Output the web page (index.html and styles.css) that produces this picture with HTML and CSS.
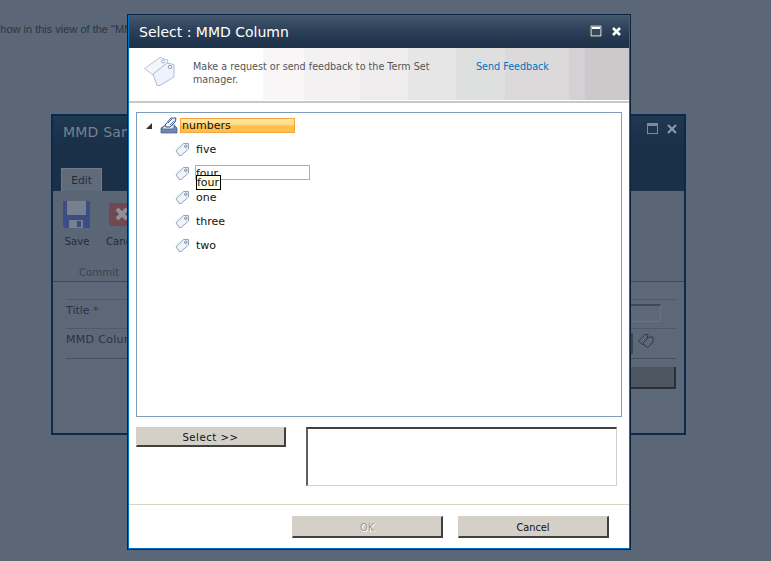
FILE: index.html
```html
<!DOCTYPE html>
<html lang="en">
<head>
<meta charset="utf-8">
<title>Select : MMD Column</title>
<link rel="stylesheet" href="styles.css">
</head>
<body>
<div class="desktop">
  <p class="page-text">Show in this view of the "MMD Sample" list</p>

  <section class="win-back">
    <div class="back-head">
      <div class="back-title-row">
        <span class="back-title">MMD Sample - New Item</span>
        <span class="back-controls">
          <svg width="11" height="11" viewBox="0 0 11 11"><rect x=".5" y=".5" width="10" height="10" fill="none" stroke="#7d8a99"/><rect x="1" y="1" width="9" height="2" fill="#7d8a99"/></svg>
          <svg width="10" height="10" viewBox="0 0 10 10"><path d="M1 1l8 8M9 1l-8 8" stroke="#8b97a5" stroke-width="2.2"/></svg>
        </span>
      </div>
      <div class="back-tab">Edit</div>
    </div>
    <div class="back-ribbon">
      <div class="ribbon-group">
        <div class="ribbon-tools">
          <div class="ribbon-tool">
            <svg width="28" height="27" viewBox="0 0 28 27"><path d="M0 0h27v27H2l-2-2z" fill="#3c4d85"/><rect x="4" y="0" width="19" height="14" fill="#77808f"/><rect x="6" y="19" width="14" height="8" fill="#77808f"/><rect x="14" y="20" width="4" height="6" fill="#3c4d85"/></svg>
            <span>Save</span>
          </div>
          <div class="ribbon-tool">
            <svg width="28" height="27" viewBox="0 0 28 27"><rect x="0" y="2" width="27" height="23" rx="2" fill="#70484f"/><path d="M8 8l10 10M18 8L8 18" stroke="#8f929c" stroke-width="4"/></svg>
            <span>Cancel</span>
          </div>
        </div>
        <div class="ribbon-label">Commit</div>
      </div>
    </div>
    <div class="back-form">
      <div class="form-row form-title">
        <span>Title <b>*</b></span>
        <i class="fake-input"></i>
      </div>
      <div class="form-row form-mmd">
        <span>MMD Column</span>
        <i class="fake-edge"></i>
        <svg width="16" height="15" viewBox="0 0 16 15"><path d="M.5 8L7 1.500h3L9 6 5 12z" fill="none" stroke="#2e3a4a" stroke-linejoin="round"/><path d="M5 10l6-6h4v5l-5 5H8z" fill="#5c6979" stroke="#2e3a4a" stroke-linejoin="round"/></svg>
      </div>
      <div class="back-button"></div>
    </div>
  </section>

  <section class="dialog">
    <header class="dlg-title">
      <h1>Select : MMD Column</h1>
      <div class="dlg-controls">
        <svg width="12" height="12" viewBox="0 0 12 12"><rect x=".5" y=".5" width="11" height="11" fill="#33475d" stroke="#000"/><rect x="1" y="1" width="10" height="10" fill="none" stroke="#fff"/><rect x="2" y="2" width="8" height="2" fill="#fff"/></svg>
        <svg width="11" height="11" viewBox="0 0 11 11"><path d="M2 2l7 7M9 2l-7 7" stroke="#fff" stroke-width="2.600"/></svg>
      </div>
    </header>

    <div class="dlg-banner">
      <svg class="banner-icon" width="31" height="29" viewBox="0 0 31 29">
        <path d="M.5 11.500L16 .5l8 2.500-1 5L9 18z" fill="#f3f6fb" stroke="#b4c4dc" stroke-linejoin="round"/>
        <circle cx="19" cy="4.500" r="1.500" fill="#fff" stroke="#9db0cc"/>
        <path d="M9 17L23 6l7 1.500V20l-14 8.500h-3z" fill="#eef2fa" stroke="#a9bbd6" stroke-linejoin="round"/>
        <circle cx="26" cy="10" r="1.700" fill="#fff" stroke="#8aa0c0"/>
      </svg>
      <p class="banner-text">Make a request or send feedback to the Term Set manager.</p>
      <a class="banner-link" href="#">Send Feedback</a>
    </div>

    <div class="dlg-body">
      <div class="tree">
        <div class="tree-root">
          <i class="twist"></i>
          <svg width="18" height="17" viewBox="0 0 18 17">
            <path d="M1 16V11l3-2h11l2 2v5z" fill="#6d89b5" stroke="#3d5a8a" stroke-width=".7"/>
            <path d="M2 11l4-3h9l-2 4H3z" fill="#e4ecf7" stroke="#3d5a8a" stroke-width=".7"/>
            <path d="M5 8l6-7h5l-1 4-5 5H6z" fill="#f4f7fc" stroke="#33528a"/>
            <path d="M8 6l4-4M10 8l4-4" stroke="#33528a" stroke-width=".8"/>
          </svg>
          <span class="root-label">numbers</span>
        </div>
        <ul class="terms">
          <li class="term">
            <svg class="tag" width="15" height="15" viewBox="0 0 15 15"><path d="M1 8.500L8.500 1.500h5V7L6 13.500H4z" fill="#eef2f9" stroke="#93a3bb" stroke-linejoin="round"/><circle cx="10.800" cy="4.300" r="1.200" fill="#fff" stroke="#6d809c"/></svg>
            <span class="term-label">five</span>
          </li>
          <li class="term term-hover">
            <svg class="tag" width="15" height="15" viewBox="0 0 15 15"><path d="M1 8.500L8.500 1.500h5V7L6 13.500H4z" fill="#eef2f9" stroke="#93a3bb" stroke-linejoin="round"/><circle cx="10.800" cy="4.300" r="1.200" fill="#fff" stroke="#6d809c"/></svg>
            <span class="term-label">four</span>
            <span class="tooltip">four</span>
          </li>
          <li class="term">
            <svg class="tag" width="15" height="15" viewBox="0 0 15 15"><path d="M1 8.500L8.500 1.500h5V7L6 13.500H4z" fill="#eef2f9" stroke="#93a3bb" stroke-linejoin="round"/><circle cx="10.800" cy="4.300" r="1.200" fill="#fff" stroke="#6d809c"/></svg>
            <span class="term-label">one</span>
          </li>
          <li class="term">
            <svg class="tag" width="15" height="15" viewBox="0 0 15 15"><path d="M1 8.500L8.500 1.500h5V7L6 13.500H4z" fill="#eef2f9" stroke="#93a3bb" stroke-linejoin="round"/><circle cx="10.800" cy="4.300" r="1.200" fill="#fff" stroke="#6d809c"/></svg>
            <span class="term-label">three</span>
          </li>
          <li class="term">
            <svg class="tag" width="15" height="15" viewBox="0 0 15 15"><path d="M1 8.500L8.500 1.500h5V7L6 13.500H4z" fill="#eef2f9" stroke="#93a3bb" stroke-linejoin="round"/><circle cx="10.800" cy="4.300" r="1.200" fill="#fff" stroke="#6d809c"/></svg>
            <span class="term-label">two</span>
          </li>
        </ul>
      </div>

      <div class="select-row">
        <button class="btn btn-select" type="button">Select &gt;&gt;</button>
        <div class="picked"></div>
      </div>
    </div>

    <footer class="dlg-footer">
      <button class="btn btn-foot btn-disabled" type="button">OK</button>
      <button class="btn btn-foot" type="button">Cancel</button>
    </footer>
  </section>
</div>
</body>
</html>
```
FILE: styles.css
```css
* { box-sizing: border-box; }
html, body { margin: 0; padding: 0; }
body {
  width: 771px;
  height: 561px;
  overflow: hidden;
  font-family: "DejaVu Sans", Verdana, sans-serif;
  font-size: 11px;
}
.desktop {
  position: relative;
  width: 771px;
  height: 561px;
  overflow: hidden;
  background: repeating-conic-gradient(#5e6a79 0 25%, #586473 0 50%) 0 0 / 2px 2px;
}
.page-text {
  margin: 0;
  padding: 22px 0 0 0;
  margin-left: -7px;
  font-family: "Liberation Sans", Arial, sans-serif;
  font-size: 11px;
  line-height: 14px;
  color: #2b3442;
  white-space: nowrap;
}

/* window behind */
.win-back {
  position: absolute;
  left: 51px;
  top: 114px;
  width: 635px;
  height: 321px;
  border: 2px solid #0b2a4c;
  display: flex;
  flex-direction: column;
  background: repeating-conic-gradient(#5e6a79 0 25%, #5a6675 0 50%) 0 0 / 2px 2px;
}
.back-head {
  height: 75px;
  padding: 0 0 0 8px;
  display: flex;
  flex-direction: column;
  justify-content: space-between;
  background: linear-gradient(#1f3852, #1a2f48 40%, #1b2f49);
}
.back-title-row {
  display: flex;
  justify-content: space-between;
  align-items: flex-start;
  padding: 8px 7px 0 2px;
}
.back-title {
  font-size: 14px;
  letter-spacing: .2px;
  color: #76828f;
}
.back-controls { display: flex; align-items: center; gap: 9px; margin-top: -1px; }
.back-tab {
  width: 41px;
  height: 23px;
  background: #5f6b7a;
  border: 1px solid #6f7c8b;
  border-bottom: 0;
  color: #232b37;
  font-size: 10.700px;
  line-height: 24px;
  text-align: center;
}
.back-ribbon {
  height: 91px;
  background: #5a6675;
  border-bottom: 1px solid #3d4856;
  padding: 10px 0 0 10px;
}
.ribbon-tools { display: flex; gap: 15px; }
.ribbon-tool {
  display: flex;
  flex-direction: column;
  align-items: center;
  gap: 7px;
  color: #252c38;
  font-size: 10.200px;
}
.ribbon-tool span { line-height: 13px; white-space: nowrap; }
.ribbon-label {
  margin: 18px 0 0 16px;
  font-size: 10.200px;
  line-height: 13px;
  color: #3a4452;
}
.back-form {
  flex: 1;
  padding: 17px 8px 0 13px;
}
.form-row {
  display: flex;
  align-items: flex-start;
  border-top: 1px solid #4e5a6a;
  padding-top: 4px;
  color: #2b3340;
  font-size: 11px;
  position: relative;
}
.form-row b { color: #5c2a3a; font-weight: 400; }
.form-title { height: 29px; justify-content: space-between; padding-right: 15px; }
.form-mmd { height: 31px; border-bottom: 1px solid #444f5e; justify-content: flex-end; gap: 5px; padding-right: 22px; }
.form-mmd span { margin-right: auto; letter-spacing: .3px; }
.form-mmd svg { flex: none; }
.fake-input {
  width: 60px;
  height: 18px;
  border: 1px solid #3e4958;
  border-top-width: 2px;
  border-right-color: #687383;
  border-bottom-color: #687383;
}
.fake-edge { width: 2px; height: 21px; background: #3d4856; }
.back-button {
  margin: 8px 0 0 auto;
  width: 60px;
  height: 22px;
  background: #4d5561;
  border-right: 2px solid #2a303a;
  border-bottom: 2px solid #2a303a;
}

/* dialog */
.dialog {
  position: absolute;
  left: 127px;
  top: 14px;
  width: 504px;
  height: 536px;
  border: 1px solid #0a2340;
  box-shadow: inset 0 0 0 1px #0072c6;
  padding: 1px;
  display: flex;
  flex-direction: column;
  background: #fff;
}
.dlg-title {
  height: 32px;
  flex: none;
  display: flex;
  align-items: center;
  justify-content: space-between;
  padding: 0 7px 2px 10px;
  background: linear-gradient(#42566d, #2c4159 45%, #1f334b 85%);
}
.dlg-title h1 {
  margin: 2px 0 0;
  font-size: 14px;
  font-weight: 400;
  color: #fff;
}
.dlg-controls { display: flex; align-items: center; gap: 9px; }
.dlg-banner {
  height: 53px;
  flex: none;
  display: flex;
  align-items: flex-start;
  padding: 9px 0 0 15px;
  border-bottom: 1px solid #fff;
  box-shadow: 0 2px 0 #c9c9c2;
  background: linear-gradient(90deg, #fff 0 134px, #f9f6f8 134px 175px, #f3f1f2 175px 231px, #efecee 231px 279px, #e6e6e6 279px 327px, #dedfdf 327px 376px, #dcd9db 376px 440px, #d5d0d5 440px 456px, #cbc9ca 456px);
}
.banner-icon { flex: none; margin-right: 18px; }
.banner-text {
  margin: 3px 0 0;
  width: 250px;
  font-size: 9.600px;
  line-height: 13px;
  color: #555;
}
.banner-link {
  margin: 3px 0 0 33px;
  font-size: 9.600px;
  line-height: 13px;
  color: #0072bc;
  text-decoration: none;
}
.dlg-body {
  flex: 1;
  padding: 11px 7px 0 7px;
  display: flex;
  flex-direction: column;
}
.tree {
  height: 305px;
  flex: none;
  border: 1px solid #7f9db9;
  padding: 5px 0 0 9px;
}
.tree-root { display: flex; align-items: center; height: 15px; }
.twist {
  width: 0;
  height: 0;
  margin-right: 8px;
  border-style: solid;
  border-width: 0 0 6px 6px;
  border-color: transparent transparent #333 transparent;
}
.tree-root svg { flex: none; margin-right: 2px; }
.root-label {
  width: 115px;
  height: 15px;
  border: 1px solid #f9a33d;
  background: linear-gradient(#ffe9a8, #ffd982 45%, #ffbd45 55%, #ffc050);
  font-size: 11px;
  line-height: 14px;
  padding-left: 1px;
  color: #111;
}
.terms {
  list-style: none;
  margin: 4px 0 0;
  padding: 0 0 0 29px;
}
.term {
  position: relative;
  display: flex;
  align-items: center;
  height: 24px;
}
.tag { flex: none; margin-right: 5px; }
.term-label {
  width: 115px;
  height: 15px;
  margin-bottom: 1px;
  padding: 1px 0 0;
  line-height: 14px;
  font-size: 11px;
  color: #111;
  border: 1px solid transparent;
}
.term-hover .term-label { border-color: #f5a040; }
.tooltip {
  position: absolute;
  left: 21px;
  top: 14px;
  height: 15px;
  padding: 0 1px 0 0;
  border: 1px solid #000;
  background: #ffffe1;
  font-size: 11px;
  line-height: 13px;
  color: #111;
}
.select-row {
  display: flex;
  align-items: flex-start;
  gap: 20px;
  margin-top: 10px;
}
.btn {
  margin: 0;
  padding: 1px 0 0;
  border-style: solid;
  border-width: 1px 2px 2px 1px;
  border-color: #d4d0c8 #404040 #404040 #d4d0c8;
  background: #d4d0c8;
  font-family: "DejaVu Sans", Verdana, sans-serif;
  font-size: 9.800px;
  color: #111;
}
.btn-select { width: 150px; height: 20px; font-size: 10.200px; letter-spacing: .5px; }
.picked {
  width: 311px;
  height: 59px;
  border-style: solid;
  border-width: 2px 1px 1px 2px;
  border-color: #404040 #d4d0c8 #d4d0c8 #606060;
  background: #fff;
}
.dlg-footer {
  height: 44px;
  flex: none;
  border-top: 1px solid #d6d6c8;
  display: flex;
  justify-content: flex-end;
  align-items: flex-start;
  gap: 15px;
  padding: 11px 20px 0 0;
}
.btn-foot { width: 151px; height: 22px; }
.btn-disabled { color: #999; text-shadow: 1px 1px 0 #fff; }
```
